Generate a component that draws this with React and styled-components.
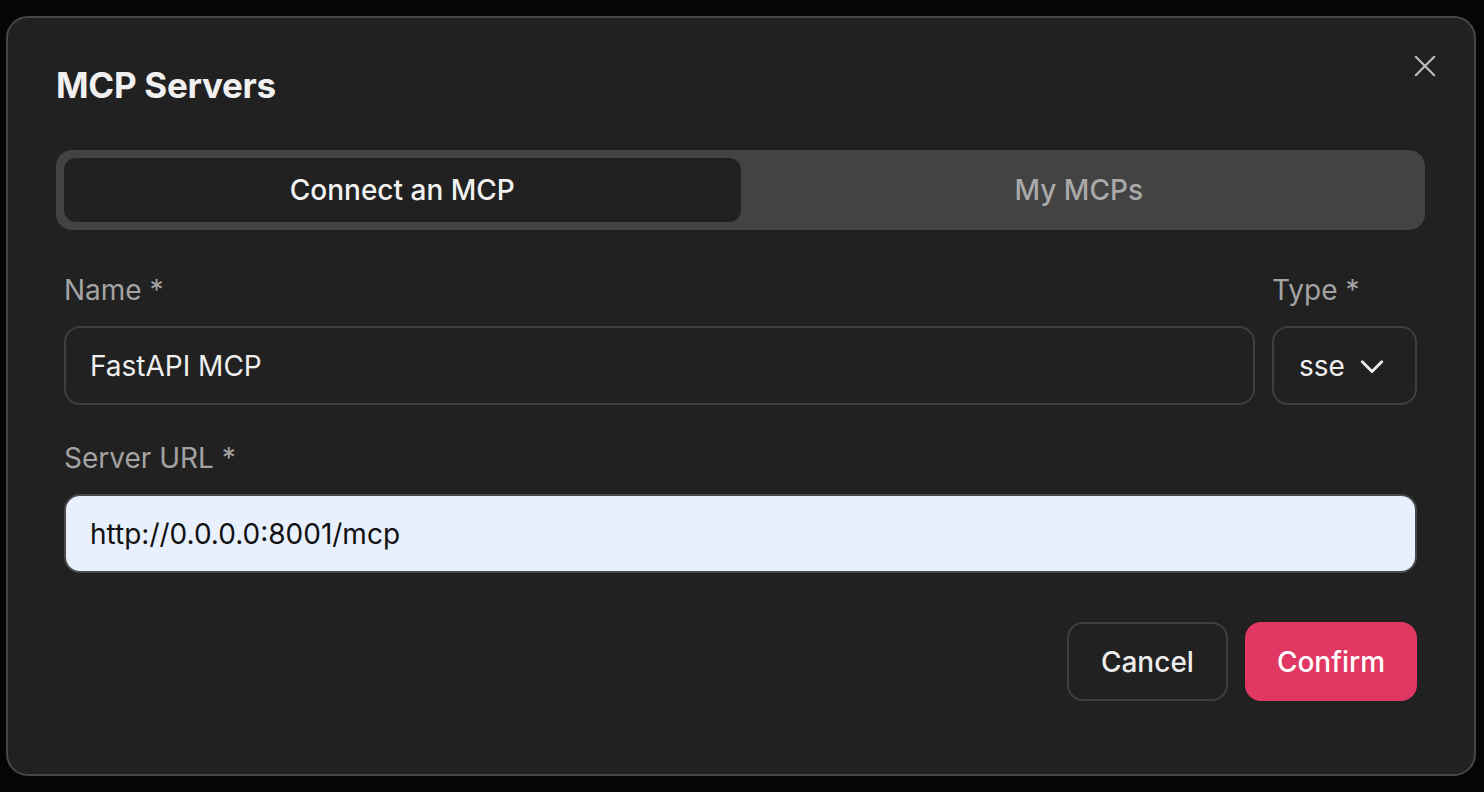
import * as React from 'react';
import styled, { createGlobalStyle } from 'styled-components';

const GlobalStyle = createGlobalStyle`
  html, body {
    margin: 0;
    padding: 0;
    background: #050505;
    font-family: Inter, "Noto Sans", sans-serif;
  }
  * { box-sizing: border-box; }
`;

const Backdrop = styled.div`
  width: 1484px;
  height: 792px;
  padding: 16px 8px 16px 6px;
`;

const Dialog = styled.div`
  position: relative;
  width: 1470px;
  height: 760px;
  background: #212121;
  border: 2px solid #474747;
  border-radius: 22px;
  padding: 47px 49px 0 48px;
  display: flex;
  flex-direction: column;
`;

const Title = styled.h2`
  margin: 0;
  font-size: 35px;
  line-height: 40px;
  font-weight: 700;
  color: #f0f0f0;
  letter-spacing: -0.3px;
`;

const CloseButton = styled.button`
  position: absolute;
  top: 33px;
  right: 34px;
  width: 30px;
  height: 30px;
  padding: 0;
  border: none;
  background: transparent;
  color: #bdbdbd;
  display: flex;
  align-items: center;
  justify-content: center;
  cursor: pointer;
`;

const Tabs = styled.div`
  margin-top: 45px;
  height: 80px;
  padding: 8px;
  border-radius: 16px;
  background: #434343;
  display: grid;
  grid-template-columns: 1fr 1fr;
`;

const Tab = styled.button`
  border: none;
  border-radius: 12px;
  background: ${p => (p.$active ? '#212121' : 'transparent')};
  color: ${p => (p.$active ? '#f2f2f2' : '#a9a9a9')};
  font-family: inherit;
  font-size: 28px;
  font-weight: 500;
  cursor: pointer;
`;

const Form = styled.div`
  padding: 0 8px;
  display: flex;
  flex-direction: column;
`;

const Row = styled.div`
  display: flex;
  gap: 17px;
  margin-top: ${p => p.$top || 0}px;
`;

const Field = styled.div`
  display: flex;
  flex-direction: column;
  gap: 20px;
  flex: ${p => (p.$grow ? 1 : '0 0 auto')};
`;

const Label = styled.label`
  font-size: 28px;
  line-height: 32px;
  color: #a3a3a3;
`;

const Input = styled.input`
  height: 79px;
  border-radius: 16px;
  border: 2px solid ${p => (p.$filled ? '#4a4a4a' : '#3f3f3f')};
  background: ${p => (p.$filled ? '#e8f0fe' : '#212121')};
  color: ${p => (p.$filled ? '#111' : '#efefef')};
  padding: 0 24px;
  font-family: inherit;
  font-size: 28px;
  outline: none;
  width: 100%;
`;

const Select = styled.div`
  width: 145px;
  height: 79px;
  border-radius: 16px;
  border: 2px solid #3f3f3f;
  display: flex;
  align-items: center;
  gap: 14px;
  padding: 0 22px 0 25px;
  color: #efefef;
  font-size: 28px;
`;

const Actions = styled.div`
  display: flex;
  justify-content: flex-end;
  gap: 17px;
  margin-top: 49px;
`;

const Button = styled.button`
  height: 79px;
  padding: 0 ${p => (p.$primary ? 30 : 32)}px;
  border-radius: 16px;
  font-family: inherit;
  font-size: 28px;
  font-weight: 500;
  cursor: pointer;
  border: 2px solid ${p => (p.$primary ? '#e03763' : '#3f3f3f')};
  background: ${p => (p.$primary ? '#e03763' : 'transparent')};
  color: ${p => (p.$primary ? '#ffffff' : '#ececec')};
`;

export default function App() {
  const [tab, setTab] = React.useState('connect');
  const [name, setName] = React.useState('FastAPI MCP');
  const [url, setUrl] = React.useState('http://0.0.0.0:8001/mcp');

  return (
    <>
      <GlobalStyle />
      <Backdrop>
        <Dialog>
          <Title>MCP Servers</Title>
          <CloseButton aria-label="Close">
            <svg width="26" height="26" viewBox="0 0 24 24" fill="none" stroke="currentColor" strokeWidth="2" strokeLinecap="round">
              <path d="M3.5 3.5l17 17M20.5 3.5l-17 17" />
            </svg>
          </CloseButton>

          <Tabs>
            <Tab $active={tab === 'connect'} onClick={() => setTab('connect')}>Connect an MCP</Tab>
            <Tab $active={tab === 'mine'} onClick={() => setTab('mine')}>My MCPs</Tab>
          </Tabs>

          <Form>
            <Row $top={44}>
              <Field $grow>
                <Label>Name *</Label>
                <Input value={name} onChange={e => setName(e.target.value)} />
              </Field>
              <Field>
                <Label>Type *</Label>
                <Select>
                  <span>sse</span>
                  <svg width="26" height="26" viewBox="0 0 24 24" fill="none" stroke="currentColor" strokeWidth="2.6" strokeLinecap="round" strokeLinejoin="round">
                    <path d="M3 8l9 9 9-9" />
                  </svg>
                </Select>
              </Field>
            </Row>
            <Row $top={37}>
              <Field $grow>
                <Label>Server URL *</Label>
                <Input $filled value={url} onChange={e => setUrl(e.target.value)} />
              </Field>
            </Row>
            <Actions>
              <Button>Cancel</Button>
              <Button $primary>Confirm</Button>
            </Actions>
          </Form>
        </Dialog>
      </Backdrop>
    </>
  );
}
